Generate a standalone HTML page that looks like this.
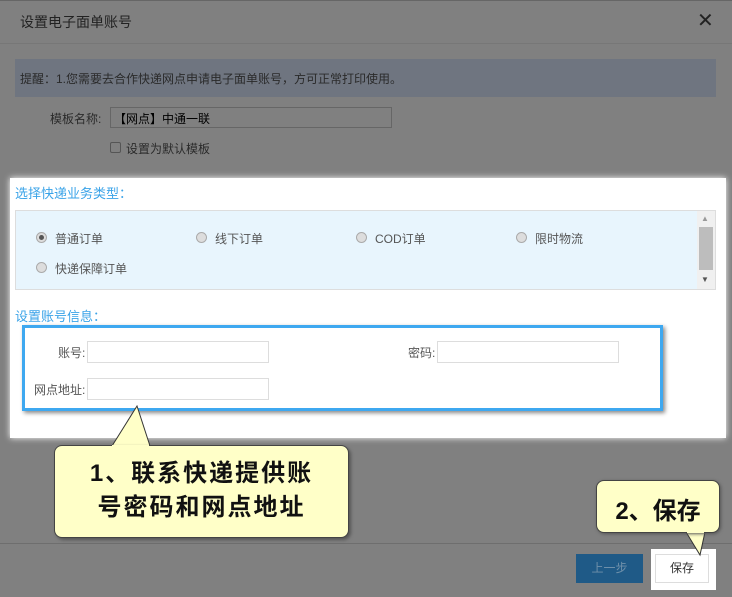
<!DOCTYPE html>
<html><head><meta charset="utf-8"><style>
body{margin:0;width:732px;height:597px;background:#808080;position:relative;overflow:hidden;font-family:"Liberation Sans","Noto Sans CJK SC",sans-serif;font-size:12px;color:#333}
.a{position:absolute}
.inp{position:absolute;background:#fff;border:1px solid #ddd;box-sizing:border-box}
.r{position:absolute;width:11px;height:11px;border-radius:50%;background:#ddd;border:1px solid #aaa;box-sizing:border-box}
.lbl{position:absolute;color:#555;font-size:12px}
</style></head><body>
<div class="a" style="left:0;top:0;width:732px;height:1px;background:#666"></div>
<div class="a" style="left:20px;top:12px;font-size:14px;color:#222">设置电子面单账号</div>
<div class="a" style="left:697px;top:8px;font-size:20px;color:#222">✕</div>
<div class="a" style="left:0;top:43px;width:732px;height:1px;background:#777"></div>
<div class="a" style="left:15px;top:59px;width:701px;height:38px;background:#6f7580"></div>
<div class="a" style="left:20px;top:70px;color:#2a2a2a">提醒：1.您需要去合作快递网点申请电子面单账号，方可正常打印使用。</div>
<div class="a" style="left:50px;top:110px;color:#2a2a2a">模板名称:</div>
<div class="a" style="left:110px;top:107px;width:282px;height:21px;border:1px solid #666;box-sizing:border-box;background:#808080"></div>
<div class="a" style="left:114px;top:110px;color:#000">【网点】中通一联</div>
<div class="a" style="left:110px;top:142px;width:11px;height:11px;border:1px solid #555;border-radius:2px;box-sizing:border-box"></div>
<div class="a" style="left:126px;top:140px;color:#2a2a2a">设置为默认模板</div>
<div class="a" style="left:10px;top:178px;width:716px;height:260px;background:#fff;box-shadow:0 0 6px #fff"></div>
<div class="a" style="left:15px;top:183px;font-size:13px;color:#3aa3e8">选择快递业务类型：</div>
<div class="a" style="left:15px;top:210px;width:701px;height:80px;background:#e8f5fd;border:1px solid #ddd;box-sizing:border-box"></div>
<div class="a" style="left:697px;top:211px;width:18px;height:78px;background:#f0f0f0"></div>
<div class="a" style="left:699px;top:227px;width:14px;height:43px;background:#bdbdbd"></div>
<div class="a" style="left:701px;top:214px;font-size:8px;color:#999">▲</div>
<div class="a" style="left:701px;top:275px;font-size:8px;color:#555">▼</div>
<div class="r" style="left:36px;top:232px"></div><div class="a" style="left:39px;top:235px;width:5px;height:5px;border-radius:50%;background:#555"></div>
<div class="lbl" style="left:55px;top:230px">普通订单</div>
<div class="r" style="left:196px;top:232px"></div><div class="lbl" style="left:215px;top:230px">线下订单</div>
<div class="r" style="left:356px;top:232px"></div><div class="lbl" style="left:375px;top:230px">COD订单</div>
<div class="r" style="left:516px;top:232px"></div><div class="lbl" style="left:535px;top:230px">限时物流</div>
<div class="r" style="left:36px;top:262px"></div><div class="lbl" style="left:55px;top:260px">快递保障订单</div>
<div class="a" style="left:15px;top:306px;font-size:13px;color:#3aa3e8">设置账号信息：</div>
<div class="a" style="left:22px;top:325px;width:641px;height:86px;border:3px solid #3ea8f0;box-sizing:border-box;box-shadow:2px 2px 4px #888"></div>
<div class="lbl" style="left:58px;top:344px">账号:</div>
<div class="inp" style="left:87px;top:341px;width:182px;height:22px"></div>
<div class="lbl" style="left:408px;top:344px">密码:</div>
<div class="inp" style="left:437px;top:341px;width:182px;height:22px"></div>
<div class="lbl" style="left:34px;top:381px">网点地址:</div>
<div class="inp" style="left:87px;top:378px;width:182px;height:22px"></div>
<div class="a" style="left:0;top:543px;width:732px;height:1px;background:#6e6e6e"></div>
<div class="a" style="left:576px;top:554px;width:67px;height:29px;background:#1f5a87;color:#6f90aa;text-align:center;line-height:29px">上一步</div>
<div class="a" style="left:651px;top:549px;width:65px;height:41px;background:#fff"></div>
<div class="a" style="left:655px;top:554px;width:54px;height:29px;border:1px solid #ddd;box-sizing:border-box;color:#333;text-align:center;line-height:27px">保存</div>
<svg class="a" style="left:0;top:0" width="732" height="597">
<path d="M112 446 L137 406 L150 446 Z" fill="#ffffc8" stroke="#333" stroke-width="1"/>
<path d="M686 532 L700 555 L705 532 Z" fill="#ffffc8" stroke="#333" stroke-width="1"/>
</svg>
<div class="a" style="left:54px;top:445px;width:295px;height:93px;background:#ffffc8;border:1px solid #444;border-radius:8px;box-sizing:border-box;box-shadow:2px 2px 3px #555"></div>
<div class="a" style="left:112px;top:445px;width:37px;height:2px;background:#ffffc8"></div>
<div class="a" style="left:54px;top:457px;width:295px;text-align:center;font-size:24px;font-weight:bold;color:#111;line-height:34px;letter-spacing:2px">1、联系快递提供账<br>号密码和网点地址</div>
<div class="a" style="left:596px;top:480px;width:124px;height:53px;background:#ffffc8;border:1px solid #444;border-radius:8px;box-sizing:border-box;box-shadow:1px 1px 3px #555"></div>
<div class="a" style="left:687px;top:530px;width:17px;height:3px;background:#ffffc8"></div>
<div class="a" style="left:596px;top:491px;width:124px;text-align:center;font-size:24px;font-weight:bold;color:#111">2、保存</div>
</body></html>
